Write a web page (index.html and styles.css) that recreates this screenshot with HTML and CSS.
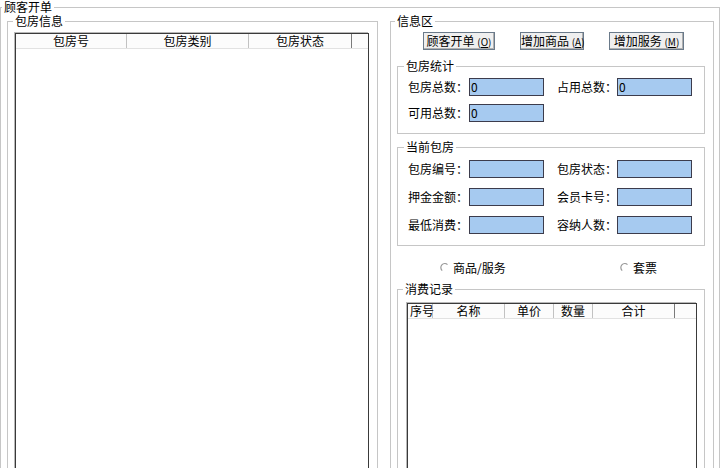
FILE: index.html
```html
<!DOCTYPE html>
<html lang="zh-CN">
<head>
    <meta charset="UTF-8">
    <title>顾客开单</title>
    <link rel="stylesheet" href="styles.css">
</head>
<body>
    <fieldset class="window">
        <legend>顾客开单</legend>
        <div class="panes">
            <fieldset class="group rooms">
                <legend>包房信息</legend>
                <div class="list room-list">
                    <div class="list-head">
                        <span class="col" style="width: 110px;">包房号</span>
                        <span class="col" style="width: 121px;">包房类别</span>
                        <span class="col last" style="width: 102px;">包房状态</span>
                    </div>
                </div>
            </fieldset>

            <fieldset class="group info">
                <legend>信息区</legend>
                <div class="toolbar">
                    <button class="btn" style="width: 72px;">顾客开单 <span class="key">(<u>O</u>)</span></button>
                    <button class="btn" style="width: 64px;">增加商品 <span class="key">(<u>A</u>)</span></button>
                    <button class="btn" style="width: 75px;">增加服务 <span class="key">(<u>M</u>)</span></button>
                </div>

                <fieldset class="group sub stats">
                    <legend>包房统计</legend>
                    <div class="form">
                        <label class="lbl">包房总数：</label>
                        <div class="inp">0</div>
                        <label class="lbl">占用总数：</label>
                        <div class="inp">0</div>
                        <label class="lbl">可用总数：</label>
                        <div class="inp">0</div>
                    </div>
                </fieldset>

                <fieldset class="group sub current">
                    <legend>当前包房</legend>
                    <div class="form">
                        <label class="lbl">包房编号：</label>
                        <div class="inp"></div>
                        <label class="lbl">包房状态：</label>
                        <div class="inp"></div>
                        <label class="lbl">押金金额：</label>
                        <div class="inp"></div>
                        <label class="lbl">会员卡号：</label>
                        <div class="inp"></div>
                        <label class="lbl">最低消费：</label>
                        <div class="inp"></div>
                        <label class="lbl">容纳人数：</label>
                        <div class="inp"></div>
                    </div>
                </fieldset>

                <div class="choices">
                    <label class="radio first">
                        <svg width="10" height="10" viewBox="0 0 10 10"><path d="M7.5 1.6 A4 4 0 0 0 2.2 7.6" fill="none" stroke="#9a9a9a" stroke-width="1.2"/></svg>
                        商品/服务
                    </label>
                    <label class="radio">
                        <svg width="10" height="10" viewBox="0 0 10 10"><path d="M7.5 1.6 A4 4 0 0 0 2.2 7.6" fill="none" stroke="#9a9a9a" stroke-width="1.2"/></svg>
                        套票
                    </label>
                </div>

                <fieldset class="group sub records">
                    <legend>消费记录</legend>
                    <div class="list record-list">
                        <div class="list-head">
                            <span class="col left" style="width: 22px;">序号</span>
                            <span class="col" style="width: 71px;">名称</span>
                            <span class="col" style="width: 48px;">单价</span>
                            <span class="col" style="width: 38px;">数量</span>
                            <span class="col last" style="width: 81px;">合计</span>
                        </div>
                    </div>
                </fieldset>
            </fieldset>
        </div>
    </fieldset>
</body>
</html>
```

FILE: styles.css
```css
body {
    margin: 0;
    background: #fff;
    font: 12px/14px "Noto Sans CJK SC", "Liberation Sans", sans-serif;
    color: #000;
    overflow: hidden;
}
fieldset {
    margin: 0;
    padding: 0;
    min-width: 0;
    border: 1px solid #c6c6c6;
}
legend {
    padding: 0 2px;
    line-height: 14px;
    height: 14px;
    font-size: 12px;
}
.window {
    width: 718px;
    height: 520px;
}
.window > legend {
    margin-left: 1px;
}
.panes {
    display: flex;
    padding-left: 6px;
}
.group > legend {
    margin-left: -2px;
}
.rooms {
    width: 371px;
    height: 500px;
    box-sizing: border-box;
    padding: 5px 0 0 7px;
}
.info {
    width: 324px;
    height: 500px;
    box-sizing: border-box;
    margin-left: 12px;
    padding: 4px 0 0 6px;
}
.list {
    background: #fff;
    border: 1px solid #3a3a3a;
    box-shadow: -1px -1px 0 #b8b8b8;
    box-sizing: border-box;
}
.room-list {
    width: 354px;
    height: 460px;
}
.list-head {
    display: flex;
    height: 14px;
    border-bottom: 1px solid #e2e2e2;
    background: #fcfcfc;
}
.col {
    text-align: center;
    border-right: 1px solid #c2c2c2;
    white-space: nowrap;
}
.col.left {
    text-align: left;
    padding-left: 2px;
}
.col.last {
    border-right-color: #7a7a7a;
}
.toolbar {
    display: flex;
    gap: 25px;
    padding-left: 26px;
}
.btn {
    height: 18px;
    padding: 0;
    box-sizing: border-box;
    border: 1px solid #6a7a8a;
    box-shadow: inset -1px -1px 0 #b0b0b0;
    background: #efefef;
    font: 12px/14px "Noto Sans CJK SC", "Liberation Sans", sans-serif;
    color: #000;
    white-space: nowrap;
}
.key {
    font-size: 10px;
}
.sub {
    width: 308px;
    box-sizing: border-box;
    padding-left: 10px;
}
.sub > legend {
    margin-left: -4px;
}
.form {
    display: grid;
    grid-template-columns: 60px 76px 73px 75px;
    grid-auto-rows: 18px;
}
.lbl {
    text-align: right;
    line-height: 18px;
    white-space: nowrap;
}
.inp {
    width: 75px;
    height: 18px;
    box-sizing: border-box;
    border: 1px solid #3c3c4c;
    background: #a6caf0;
    padding-left: 1px;
    line-height: 16px;
}
.form > .inp:nth-child(2),
.form > .inp:nth-child(6),
.form > .inp:nth-child(10) {
    margin-left: 1px;
}
.stats {
    margin-top: 9px;
    padding-top: 5px;
    padding-bottom: 11px;
}
.stats .form {
    row-gap: 8px;
}
.current {
    margin-top: 6px;
    padding-top: 6px;
    padding-bottom: 11px;
}
.current .form {
    row-gap: 10px;
}
.choices {
    display: flex;
    margin-top: 15px;
    padding-left: 43px;
    height: 14px;
}
.radio {
    display: flex;
    align-items: center;
    gap: 3px;
}
.radio.first {
    width: 180px;
}
.records {
    margin-top: 7px;
    height: 300px;
    padding-top: 7px;
    padding-left: 9px;
}
.record-list {
    width: 290px;
    height: 280px;
}
```
